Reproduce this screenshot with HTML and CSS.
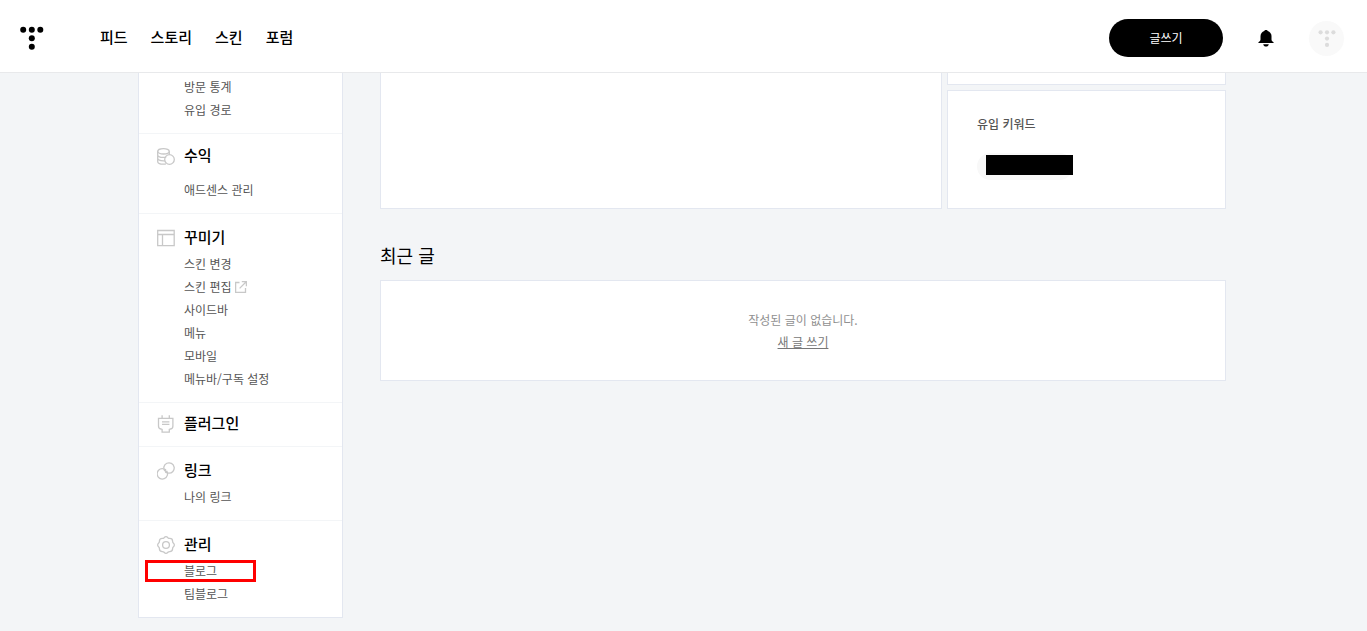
FILE: index.html
```html
<!DOCTYPE html>
<html lang="ko">
<head>
  <meta charset="UTF-8">
  <meta name="viewport" content="width=device-width, initial-scale=1.0">
  <title>블로그 관리</title>
  <link rel="stylesheet" href="styles.css">
</head>
<body>
<header class="header">
  <a class="logo" href="#" aria-label="홈">
    <svg width="24" height="24" viewBox="0 0 24 24">
      <circle cx="3.2" cy="3.7" r="3"/>
      <circle cx="11.8" cy="3.7" r="3"/>
      <circle cx="20.3" cy="3.7" r="3"/>
      <circle cx="11.8" cy="12.3" r="3"/>
      <circle cx="11.8" cy="20.7" r="3"/>
    </svg>
  </a>
  <nav class="gnb">
    <a href="#">피드</a>
    <a href="#">스토리</a>
    <a href="#">스킨</a>
    <a href="#">포럼</a>
  </nav>
  <div class="user-menu">
    <button class="write-btn" type="button">글쓰기</button>
    <button class="icon-btn" type="button" aria-label="알림">
      <svg width="16" height="18" viewBox="0 0 16 18">
        <path d="M8 1c.9 0 1.500.4 1.700 1 2.300.7 3.800 2.600 3.800 5.200v3.300c0 1.300.8 1.900 1.800 2.500.5.300.5.900 0 .9H.7c-.5 0-.5-.6 0-.9 1-.6 1.800-1.200 1.800-2.500V7.200C2.500 4.600 4 2.700 6.300 2c.2-.6.800-1 1.700-1z"/>
        <path d="M5.200 15.200h5.600c-.3 1.500-1.400 2.400-2.800 2.400s-2.500-.9-2.800-2.400z"/>
      </svg>
    </button>
    <button class="avatar" type="button" aria-label="내 계정">
      <svg width="18" height="18" viewBox="0 0 18 18">
        <circle cx="2.600" cy="3.300" r="2.100"/>
        <circle cx="9" cy="3.300" r="2.100"/>
        <circle cx="15.400" cy="3.300" r="2.100"/>
        <circle cx="9" cy="9.600" r="2.100"/>
        <circle cx="9" cy="15.900" r="2.100"/>
      </svg>
    </button>
  </div>
</header>

<div class="page">
  <aside class="sidebar">
    <section class="menu-group menu-group-first">
      <ul class="menu-list">
        <li><a href="#">방문 통계</a></li>
        <li><a href="#">유입 경로</a></li>
      </ul>
    </section>
    <section class="menu-group menu-group-revenue">
      <h2 class="menu-title">
        <svg width="18" height="18" viewBox="0 -1 18 18">
          <ellipse cx="6.500" cy="3.300" rx="5.800" ry="2.700"/>
          <path d="M.7 3.300v10.200c0 1.400 2.500 2.700 5.800 2.700.9 0 1.800-.1 2.500-.3M12.300 3.300v3.200M.7 6.700c0 1.500 2.500 2.700 5.800 2.700 1 0 1.900-.1 2.700-.3M.7 10.100c0 1.500 2.500 2.700 5.800 2.700h1.400"/>
          <circle cx="12.500" cy="11.500" r="4.800"/>
        </svg>
        <a href="#">수익</a>
      </h2>
      <ul class="menu-list">
        <li><a href="#">애드센스 관리</a></li>
      </ul>
    </section>
    <section class="menu-group">
      <h2 class="menu-title">
        <svg width="18" height="18" viewBox="0 0 18 18">
          <path d="M.7 1.500h16.500v15.200H.7zM.7 5.500h16.500M5.500 5.500v11.200"/>
        </svg>
        <a href="#">꾸미기</a>
      </h2>
      <ul class="menu-list">
        <li><a href="#">스킨 변경</a></li>
        <li>
          <a href="#">스킨 편집
            <svg width="12" height="12" viewBox="0 0 12 12">
              <path d="M4.500 1.500H.6v9.900h9.900V7M6.800.6h4.600v4.600M11.200.8 4.600 7.400"/>
            </svg>
          </a>
        </li>
        <li><a href="#">사이드바</a></li>
        <li><a href="#">메뉴</a></li>
        <li><a href="#">모바일</a></li>
        <li><a href="#">메뉴바/구독 설정</a></li>
      </ul>
    </section>
    <section class="menu-group menu-group-single">
      <h2 class="menu-title">
        <svg width="18" height="18" viewBox="0 0 18 18">
          <path d="M1.500 3.300h14.400v7.600c0 1.700-.9 2.800-2.300 3.100l-1.300.4v2.800H5.100v-2.800L3.800 14c-1.400-.3-2.300-1.400-2.300-3.100zM5.100.2v3.100M12.300.2v3.100M5 6.900h7.400M5 9.300h7.400"/>
        </svg>
        <a href="#">플러그인</a>
      </h2>
    </section>
    <section class="menu-group">
      <h2 class="menu-title">
        <svg width="18" height="18" viewBox="0 0 18 18">
          <path d="M9.600 8.900a5.200 5.200 0 1 1-3.800-2.200c1.500.1 2.600 1.100 2.900 2.300.2.700.1 1.300-.2 1.900"/>
          <path d="M7.900 9.200a5.200 5.200 0 1 1 3.800 2c-1.500 0-2.700-.9-3.100-2.200-.2-.7-.1-1.400.1-1.900"/>
        </svg>
        <a href="#">링크</a>
      </h2>
      <ul class="menu-list">
        <li><a href="#">나의 링크</a></li>
      </ul>
    </section>
    <section class="menu-group">
      <h2 class="menu-title">
        <svg width="18" height="18" viewBox="0 0 18 18">
          <path d="M7.100 1.700Q9-.4 10.900 1.700 11.700 2.500 12.800 2.400 15.600 2.400 15.600 5.200 15.500 6.300 16.300 7.100 18.400 9 16.300 10.900 15.500 11.700 15.600 12.800 15.600 15.600 12.800 15.600 11.700 15.500 10.900 16.300 9 18.400 7.100 16.300 6.300 15.500 5.200 15.600 2.400 15.600 2.400 12.800 2.500 11.700 1.700 10.900-.4 9 1.700 7.100 2.500 6.300 2.400 5.200 2.400 2.400 5.200 2.400 6.300 2.500 7.100 1.700z"/>
          <circle cx="9" cy="9" r="3.400"/>
        </svg>
        <a href="#">관리</a>
      </h2>
      <ul class="menu-list">
        <li class="marked"><a href="#">블로그</a></li>
        <li><a href="#">팀블로그</a></li>
      </ul>
    </section>
  </aside>

  <main class="content">
    <div class="stats">
      <section class="card stats-main"></section>
      <div class="stats-side">
        <section class="card stats-rest"></section>
        <section class="card keyword-card">
          <h3 class="keyword-title">유입 키워드</h3>
          <span class="keyword"><span class="keyword-mask"></span></span>
        </section>
      </div>
    </div>
    <h2 class="section-title">최근 글</h2>
    <section class="card empty-card">
      <p>작성된 글이 없습니다.</p>
      <a href="#">새 글 쓰기</a>
    </section>
  </main>
</div>
</body>
</html>
```
FILE: styles.css
```css
*,
*::after {
  box-sizing: border-box;
  margin: 0;
  padding: 0;
}

body {
  background-color: #f3f5f7;
  color: #000;
  font-family: 'Noto Sans CJK KR', 'Noto Sans', sans-serif;
  font-size: 12px;
}

a {
  color: inherit;
  text-decoration: none;
}

ul {
  list-style: none;
}

button {
  border: none;
  background: none;
  font-family: inherit;
  cursor: pointer;
}

svg {
  display: block;
  flex-shrink: 0;
}

/* header */
.header {
  display: flex;
  align-items: center;
  height: 73px;
  padding: 4px 23px 0 20px;
  background-color: #fff;
  border-bottom: 1px solid #e8e9eb;
}

.gnb {
  display: flex;
  gap: 23px;
  margin-left: 56px;
  padding-bottom: 2px;
  font-size: 15px;
  font-weight: 500;
  line-height: 22px;
}

.user-menu {
  display: flex;
  align-items: center;
  gap: 35px;
  margin-left: auto;
}

.write-btn {
  width: 114px;
  height: 38px;
  padding-bottom: 2px;
  border-radius: 19px;
  background-color: #000;
  color: #fff;
  font-size: 12px;
}

.avatar {
  display: flex;
  justify-content: center;
  align-items: center;
  width: 35px;
  height: 35px;
  border-radius: 50%;
  background-color: #f9f9f9;
  fill: #dcdcdc;
}

/* page */
.page {
  display: flex;
  align-items: flex-start;
  gap: 37px;
  max-width: 1091px;
  margin: 0 auto;
  padding: 0 3px 13px 0;
}

.sidebar {
  flex: 0 0 205px;
  background-color: #fff;
  border: 1px solid #e3e7f0;
  border-top: none;
}

.menu-group {
  padding: 12px 18px;
  border-bottom: 1px solid #f3f5f7;
}

.menu-group:last-child {
  border-bottom: none;
}

.menu-group-first {
  padding-top: 2px;
}

.menu-group-first .menu-list {
  margin-top: 0;
}

.menu-group-revenue {
  padding-top: 10px;
}

.menu-group-revenue .menu-list {
  margin-top: 11px;
}

.menu-group-single {
  padding-top: 9px;
  padding-bottom: 11px;
}

.menu-title {
  display: flex;
  align-items: center;
  gap: 9px;
  height: 23px;
  font-size: 15px;
  font-weight: 500;
  line-height: 21px;
}

.menu-title a {
  padding-bottom: 2px;
}

.menu-title svg,
.menu-list svg {
  fill: none;
  stroke: #c8c8c8;
  stroke-width: 1.3;
}

.menu-list {
  margin-top: 3px;
  margin-left: 27px;
  color: #555;
  line-height: 23px;
}

.menu-list a {
  display: flex;
  align-items: center;
  gap: 3px;
}

.marked {
  position: relative;
}

.marked::after {
  content: '';
  position: absolute;
  top: 1px;
  left: -39px;
  width: 111px;
  height: 22px;
  border: 3px solid #f00;
  pointer-events: none;
}

/* content */
.content {
  flex: 1;
  min-width: 0;
}

.card {
  background-color: #fff;
  border: 1px solid #e3e7f0;
}

.stats {
  display: grid;
  grid-template-columns: 1fr 279px;
  gap: 5px;
}

.stats-main,
.stats-rest {
  border-top: none;
}

.stats-side {
  display: grid;
  gap: 5px;
}

.stats-rest {
  min-height: 12px;
}

.keyword-card {
  padding: 23px 29px 28px;
}

.keyword-title {
  margin-bottom: 19px;
  color: #555;
  font-size: 12px;
  font-weight: 500;
  line-height: 20px;
}

.keyword {
  display: inline-flex;
  vertical-align: top;
  padding: 2px 0 5px 9px;
  border-radius: 14px;
  background-color: #f8f8f8;
}

.keyword-mask {
  width: 87px;
  height: 20px;
  background-color: #000;
}

.section-title {
  margin: 32px 0 10px;
  font-size: 18px;
  font-weight: 400;
  line-height: 29px;
}

.empty-card {
  padding: 28px 20px 27px;
  color: #909090;
  line-height: 22px;
  text-align: center;
}

.empty-card a {
  color: #777;
  text-decoration: underline;
}
```
